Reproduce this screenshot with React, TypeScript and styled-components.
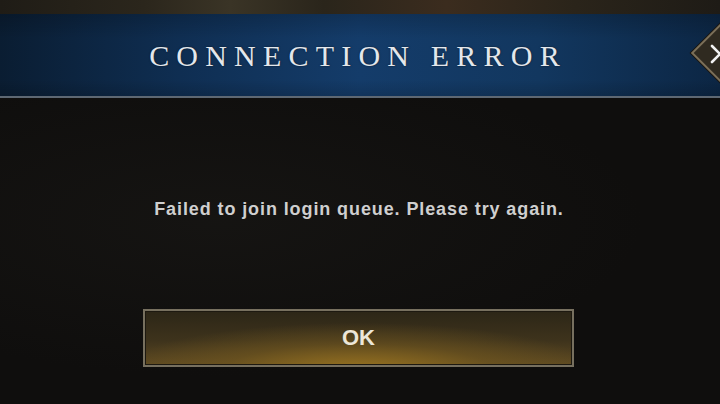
import React from 'react'
import styled, { createGlobalStyle } from 'styled-components'

const GlobalStyle = createGlobalStyle`
  html, body {
    margin: 0;
    padding: 0;
    background: #0e0d0c;
  }
  #root {
    width: 720px;
    height: 404px;
    overflow: hidden;
  }
`

const Screen = styled.div`
  position: relative;
  display: flex;
  flex-direction: column;
  width: 720px;
  height: 404px;
  overflow: hidden;
  background: #0e0d0c;
`

const Backdrop = styled.div`
  height: 14px;
  background: linear-gradient(
    90deg,
    #1f1c16 0%,
    #2b261c 20%,
    #3a3426 32%,
    #2a251b 45%,
    #3b2c1e 62%,
    #2a241a 80%,
    #1e1b16 100%
  );
`

const Header = styled.div`
  position: relative;
  display: flex;
  align-items: center;
  justify-content: center;
  height: 82px;
  border-bottom: 2px solid #5e6873;
  background:
    linear-gradient(180deg, rgba(0, 0, 0, 0.18) 0%, rgba(0, 0, 0, 0) 30%, rgba(0, 0, 0, 0) 80%, rgba(0, 0, 0, 0.15) 100%),
    linear-gradient(90deg, #0a1d32 0%, #0f2e52 25%, #143c6a 50%, #12375f 75%, #0c2644 100%);
`

const Title = styled.h1`
  margin: 2px 0 0 -4px;
  font-family: 'Liberation Serif', 'DejaVu Serif', serif;
  font-weight: 400;
  font-size: 30px;
  letter-spacing: 7.2px;
  color: #e3e7ec;
  text-shadow: 0 0 2px rgba(0, 0, 0, 0.6);
`

const CloseButton = styled.button`
  position: absolute;
  right: -24px;
  top: 17px;
  width: 44px;
  height: 44px;
  padding: 0;
  transform: rotate(45deg);
  background: #2f2a20;
  border: 2px solid #7b6f58;
  box-shadow: 0 0 0 1px #1b1712;
`

const CloseGlyph = styled.svg`
  position: absolute;
  right: -11px;
  top: 30px;
  width: 22px;
  height: 20px;
`

const Body = styled.div`
  flex: 1;
  display: flex;
  flex-direction: column;
  align-items: center;
  padding-top: 101px;
  background:
    radial-gradient(ellipse at 30% 40%, rgba(40, 38, 34, 0.25), rgba(0, 0, 0, 0) 60%),
    #0f0e0d;
`

const Message = styled.p`
  margin: 0 0 0 -2px;
  font-family: 'Liberation Sans', Arial, sans-serif;
  font-weight: 700;
  font-size: 18px;
  letter-spacing: 0.9px;
  line-height: 20px;
  color: #cfcfcf;
`

const OkButton = styled.button`
  margin: 90px 0 0 -3px;
  width: 431px;
  height: 58px;
  border: 2px solid #77705f;
  box-shadow: inset 0 0 0 1px #1d1910;
  background:
    radial-gradient(ellipse 70% 110% at 50% 110%, rgba(160, 120, 32, 0.9) 0%, rgba(115, 88, 30, 0.55) 45%, rgba(0, 0, 0, 0) 80%),
    linear-gradient(180deg, #2c2617 0%, #3e331c 55%, #5e4a22 100%);
  font-family: 'Liberation Sans', Arial, sans-serif;
  font-weight: 700;
  font-size: 22px;
  color: #ece6d8;
  cursor: pointer;
`

const Footer = styled.div`
  margin-top: auto;
  height: 9px;
  border-top: 2px solid #3e3d3a;
  background: #121110;
`

export default function App() {
  return (
    <>
      <GlobalStyle />
      <Screen>
        <Backdrop />
        <Header>
          <Title>CONNECTION ERROR</Title>
          <CloseButton aria-label="Close" />
          <CloseGlyph viewBox="0 0 22 20">
            <path d="M3 2 L19 18 M3 18 L19 2" stroke="#f2f2f2" strokeWidth="2.6" strokeLinecap="round" fill="none" />
          </CloseGlyph>
        </Header>
        <Body>
          <Message>Failed to join login queue. Please try again.</Message>
          <OkButton>OK</OkButton>
          <Footer />
        </Body>
      </Screen>
    </>
  )
}
